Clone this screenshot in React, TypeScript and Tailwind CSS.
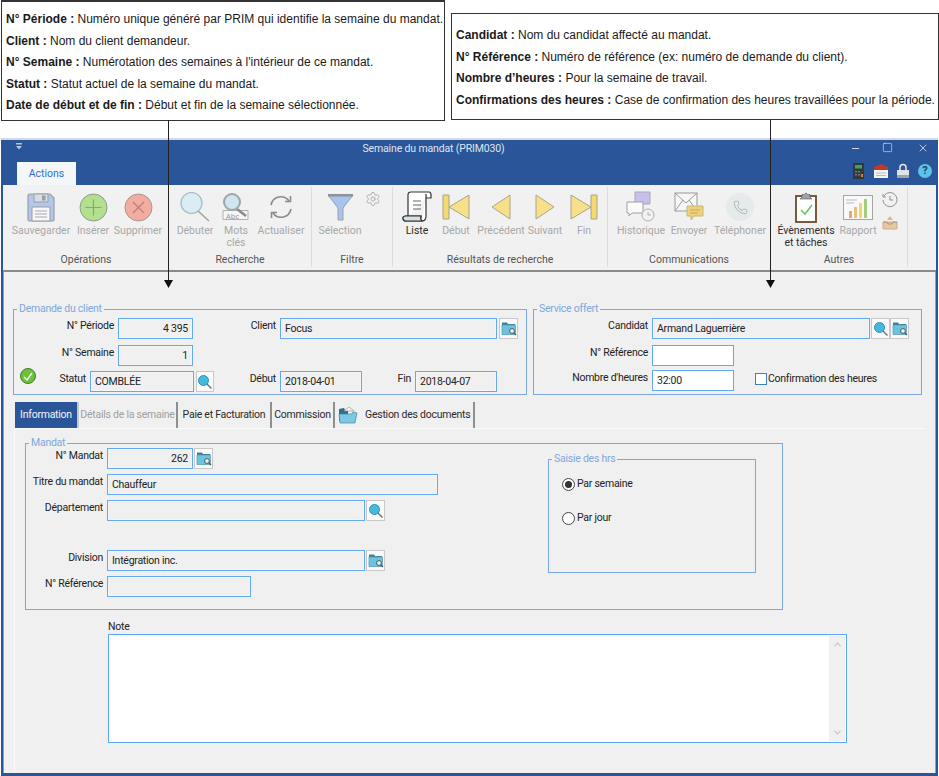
import { ReactNode } from "react";
import { Minus, Phone, Square, X, ChevronUp, ChevronDown, Settings } from "lucide-react";

function Arrow({ className }: { className: string }) {
  return (
    <div className={`absolute top-[120px] w-[9px] flex flex-col items-center ${className}`}>
      <div className="w-px h-[160px] bg-[#222]" />
      <svg width="9" height="8" viewBox="0 0 9 8">
        <path d="M0 0h9L4.5 8z" fill="#111" />
      </svg>
    </div>
  );
}

function Note({ title, text }: { title: string; text: string }) {
  return (
    <p className="h-[21.6px] leading-[21.6px] whitespace-nowrap">
      <b>{title}</b> {text}
    </p>
  );
}

function SearchIcon() {
  return (
    <svg width="16" height="16" viewBox="0 0 16 16">
      <path d="M9.5 9.5 14.5 14.5" stroke="#777" strokeWidth="1.5" />
      <circle cx="6.5" cy="6.5" r="5" fill="#45b9dc" stroke="#2f93b5" />
    </svg>
  );
}

function FolderSearchIcon() {
  return (
    <svg width="16" height="15" viewBox="0 0 16 15">
      <path d="M1 1.5h5l1 1.5h7v2H1z" fill="#3d7f98" />
      <rect x="1" y="4" width="13.5" height="9.5" fill="#6cc3de" stroke="#4f97b0" strokeWidth=".7" />
      <circle cx="11" cy="10" r="2.4" fill="#e8f4f8" stroke="#555" />
      <path d="M12.8 11.8 15 14" stroke="#555" strokeWidth="1.2" />
    </svg>
  );
}

function SmallButton({ children, w = "w-[19px]" }: { children: ReactNode; w?: string }) {
  return (
    <div className={`${w} h-[21px] shrink-0 flex items-center justify-center bg-[#fafafa] border border-[#c8c8c8]`}>
      {children}
    </div>
  );
}

function Label({ children, w }: { children: ReactNode; w: string }) {
  return <div className={`${w} shrink-0 text-right pr-[4px] leading-[16px] whitespace-nowrap`}>{children}</div>;
}

function Field({ w, value, right, white }: { w: string; value?: string; right?: boolean; white?: boolean }) {
  return (
    <div
      className={`${w} h-[21px] shrink-0 flex items-center px-[4px] border border-[#62a9f2] shadow-[inset_0_0_0_1px_rgba(255,255,255,.35)] ${
        white ? "bg-white" : "bg-[#f0f0f0]"
      } ${right ? "justify-end" : ""}`}
    >
      {value}
    </div>
  );
}

function Legend({ children }: { children: ReactNode }) {
  return (
    <span className="absolute -top-[8px] left-[3px] px-[2px] bg-[#f0f0f0] text-[#7ea8de] leading-[14px]">{children}</span>
  );
}

function Tool({ w, label, muted = true, children }: { w: string; label: ReactNode; muted?: boolean; children: ReactNode }) {
  return (
    <div className={`${w} shrink-0 flex flex-col items-center`}>
      <div className="h-[38px] pt-[2px] w-full flex items-center justify-center">{children}</div>
      <div className={`text-center leading-[11.5px] whitespace-nowrap ${muted ? "text-[#a8a8a8]" : "text-[#2c2c2c]"}`}>
        {label}
      </div>
    </div>
  );
}

function Group({ w, title, pl, children }: { w: string; title: string; pl: string; children: ReactNode }) {
  return (
    <div className={`${w} h-[80px] shrink-0 flex flex-col justify-between border-r border-[#dcdcdc]`}>
      <div className={`flex ${pl}`}>{children}</div>
      <div className="h-[14px] leading-[14px] text-center text-[#555]">{title}</div>
    </div>
  );
}

function Triangle({ dir }: { dir: "first" | "prev" | "next" | "last" }) {
  const shapes = {
    first: { w: 28, bar: "M1 1h6v24H1z", tri: "M27 1v24L7 13z" },
    prev: { w: 20, bar: "", tri: "M19 1v24L1 13z" },
    next: { w: 20, bar: "", tri: "M1 1v24l18-12z" },
    last: { w: 28, bar: "M21 1h6v24h-6z", tri: "M1 1v24l20-12z" },
  }[dir];
  return (
    <svg width={shapes.w} height="26" viewBox={`0 0 ${shapes.w} 26`}>
      <path d={shapes.tri} fill="#f8e08a" stroke="#a8a48c" />
      {shapes.bar && <path d={shapes.bar} fill="#f4d970" stroke="#a8a48c" />}
    </svg>
  );
}

export default function App() {
  return (
    <div className="relative w-[939px] h-[776px] bg-white overflow-hidden flex flex-col font-['Roboto',sans-serif] text-[10.5px] text-[#222]">
      <div className="h-[138px] shrink-0 flex items-start font-['Liberation_Sans',sans-serif] text-[12px] text-[#1a1a1a]">
        <div className="w-[444px] h-[121px] ml-px pl-[4px] pt-[7px] border border-[#333] border-t-2">
          <Note title="N° Période :" text="Numéro unique généré par PRIM qui identifie la semaine du mandat." />
          <Note title="Client :" text="Nom du client demandeur." />
          <Note title="N° Semaine :" text="Numérotation des semaines à l'intérieur de ce mandat." />
          <Note title="Statut :" text="Statut actuel de la semaine du mandat." />
          <Note title="Date de début et de fin :" text="Début et fin de la semaine sélectionnée." />
        </div>
        <div className="w-[488px] h-[107px] ml-[6px] mt-[13px] pl-[4px] pt-[11px] border border-[#333]">
          <Note title="Candidat :" text="Nom du candidat affecté au mandat." />
          <Note title="N° Référence :" text="Numéro de référence (ex: numéro de demande du client)." />
          <Note title="Nombre d’heures :" text="Pour la semaine de travail." />
          <Note title="Confirmations des heures :" text="Case de confirmation des heures travaillées pour la période." />
        </div>
      </div>

      <Arrow className="left-[164px]" />
      <Arrow className="left-[766px]" />

      <div className="h-[638px] ml-px w-[937px] flex flex-col bg-[#2a5599] border-t-2 border-t-[#d2d9e8] pl-[2px] pr-[2px] pb-[3px]">
        <div className="h-[22px] shrink-0 flex items-start relative text-[#dfe6f2]">
          <svg className="absolute left-[13px] top-[3px]" width="6" height="7" viewBox="0 0 6 7">
            <path d="M0 0h6v1.5H0zM0 3h6L3 6.5z" fill="#b8c6de" />
          </svg>
          <div className="flex-1 text-center pt-[1px] leading-[15px] pr-[72px] tracking-[-0.15px]">Semaine du mandat (PRIM030)</div>
          <Minus className="absolute left-[847px] top-[3px] text-[#dfe6f2]" size={11} strokeWidth={2} />
          <Square className="absolute left-[879px] top-[2px] text-[#dfe6f2]" size={11} strokeWidth={1.4} />
          <X className="absolute left-[914px] top-[2px] text-[#dfe6f2]" size={12} strokeWidth={1.6} />
        </div>
        <div className="h-[23px] shrink-0 flex justify-between">
          <div className="ml-[14px] w-[59px] h-[23px] bg-[#f4f6f8] text-[#2b70d0] text-center leading-[24px]">Actions</div>
          <div className="flex items-center gap-[8px] pr-[4px] pb-[6px]">
            <svg width="14" height="16" viewBox="0 0 14 16">
              <rect width="11" height="16" x="1" fill="#33393b" />
              <rect x="3" y="2" width="7" height="3.5" fill="#3fa45a" />
              <path d="M3 8h2v1.5H3zM6 8h2v1.5H6zM3 11h2v1.5H3zM6 11h2v1.5H6z" fill="#777" />
              <rect x="9" y="11" width="2" height="3" fill="#d08030" />
            </svg>
            <svg width="14" height="16" viewBox="0 0 14 16">
              <rect y="4" width="14" height="11" fill="#f3f3f3" />
              <path d="M0 7V4l7-3 7 3v3z" fill="#c0392b" />
              <path d="M2 10h10M2 12.500h10" stroke="#bbb" />
            </svg>
            <svg width="14" height="16" viewBox="0 0 14 16">
              <path d="M4 8V4.500a3 3 0 0 1 6 0V8" fill="none" stroke="#e8e8e8" strokeWidth="1.5" />
              <rect x="1" y="7" width="12" height="8" fill="#dfe3e6" />
              <rect x="1" y="12" width="12" height="3" fill="#9aa5ae" />
            </svg>
            <div className="w-[14px] h-[14px] rounded-full bg-[#5cc3e8] text-[#1d3f66] font-bold text-[11px] leading-[14px] text-center">?</div>
          </div>
        </div>

        <div className="h-[87px] shrink-0 bg-[#f1f1f1] border-b-2 border-[#8a8a8a] flex items-start pt-[2px] pl-[1px]">
          <Group w="w-[165px]" title="Opérations" pl="pl-[5px]">
            <Tool w="w-[64px]" label="Sauvegarder">
              <svg width="28" height="29" viewBox="0 0 28 29">
                <path d="M1 3q0-2 2-2h20l4 4v21q0 2-2 2H3q-2 0-2-2z" fill="#b3c7ec" stroke="#9a9da6" strokeWidth="1.2" />
                <path d="M7 1h14v8H7z" fill="#d9dde3" stroke="#9a9da6" />
                <rect x="15" y="2.500" width="3.500" height="5" fill="#9a9da6" />
                <path d="M5 14h18v14H5z" fill="#f7f7f7" stroke="#9a9da6" />
                <path d="M8 18h12M8 21h12M8 24h12" stroke="#aaa" />
              </svg>
            </Tool>
            <Tool w="w-[40px]" label="Insérer">
              <svg width="29" height="29" viewBox="0 0 29 29">
                <circle cx="14.500" cy="14.500" r="13.500" fill="#b3e08f" stroke="#8f9c8b" />
                <path d="M14.500 6.500v16M6.500 14.500h16" stroke="#84a873" strokeWidth="1.200" />
              </svg>
            </Tool>
            <Tool w="w-[50px]" label="Supprimer">
              <svg width="29" height="29" viewBox="0 0 29 29">
                <circle cx="14.500" cy="14.500" r="13.500" fill="#f3aca2" stroke="#a39a98" />
                <path d="m9 9 11 11M20 9 9 20" stroke="#b58078" strokeWidth="1.200" />
              </svg>
            </Tool>
          </Group>
          <Group w="w-[143px]" title="Recherche" pl="pl-[5px]">
            <Tool w="w-[42px]" label="Débuter">
              <svg width="30" height="30" viewBox="0 0 30 30">
                <path d="m18 19 11 10" stroke="#9a9a9a" strokeWidth="1.200" />
                <circle cx="11.500" cy="11" r="10.500" fill="#d8edf5" stroke="#a9b8bf" strokeWidth="1.200" />
              </svg>
            </Tool>
            <Tool w="w-[40px]" label={<>Mots<br />clés</>}>
              <svg width="28" height="30" viewBox="0 0 28 30">
                <path d="M1 18.500h25v9H1z" fill="#f5f5f5" stroke="#b0b0b0" />
                <text x="4" y="26.500" fontSize="7.500" fill="#999" fontFamily="Noto Sans">Abc</text>
                <path d="m15 17 9 7" stroke="#8a8a8a" strokeWidth="2.500" />
                <circle cx="10" cy="10" r="8" fill="#cfe6ee" stroke="#9ea4a8" strokeWidth="2" />
              </svg>
            </Tool>
            <Tool w="w-[50px]" label="Actualiser">
              <svg width="26" height="26" viewBox="0 0 26 26" fill="none" stroke="#8b8b8b" strokeWidth="1.600">
                <path d="M3 11a10 10 0 0 1 18-4" />
                <path d="M23 15a10 10 0 0 1-18 4" />
                <path d="m17 7.500h5.500v-5.500M9 18.500H3.500V24" />
              </svg>
            </Tool>
          </Group>
          <Group w="w-[81px]" title="Filtre" pl="pl-[6px]">
            <Tool w="w-[44px]" label="Sélection">
              <svg width="27" height="28" viewBox="0 0 27 28">
                <path d="M1 2h25L16 15v12h-5V15z" fill="#a9c4ec" stroke="#9aa0a6" />
                <path d="M1 1h25v2.500H1z" fill="#8c9299" />
              </svg>
            </Tool>
            <div className="w-[22px] h-[20px] flex items-center justify-center">
              <Settings className="text-[#a8a8a8] mt-[4px]" size={16} strokeWidth={1.3} />
            </div>
          </Group>
          <Group w="w-[215px]" title="Résultats de recherche" pl="pl-[6px]">
            <Tool w="w-[36px]" label="Liste" muted={false}>
              <svg width="30" height="32" viewBox="0 0 30 32" fill="none" stroke="#333" strokeWidth="1.200">
                <path d="M6 25V4q0-3 3-3h18q2 0 2 3v3h-5" fill="#fff" />
                <path d="M24 3v22q0 5-4 5H4q-3 0-3-3 0-2 3-2h15q-1 5 1 5" fill="#fff" />
                <path d="M4 25h15q-1 3 1 5H4q-3 0-3-3 0-2 3-2z" fill="#d5e0e3" />
                <path d="M11 10h8M11 14h8M11 18h8" stroke="#666" />
              </svg>
            </Tool>
            <Tool w="w-[42px]" label="Début"><Triangle dir="first" /></Tool>
            <Tool w="w-[48px]" label="Précédent"><Triangle dir="prev" /></Tool>
            <Tool w="w-[40px]" label="Suivant"><Triangle dir="next" /></Tool>
            <Tool w="w-[38px]" label="Fin"><Triangle dir="last" /></Tool>
          </Group>
          <Group w="w-[163px]" title="Communications" pl="pl-[4px]">
            <Tool w="w-[58px]" label="Historique">
              <svg width="30" height="32" viewBox="0 0 30 32">
                <path d="M9 1h15v12H9z" fill="#c5c0f0" stroke="#aaa" />
                <path d="M1 11h16v11H6l-3 3v-3H1z" fill="#fafafa" stroke="#a0a0a0" />
                <circle cx="22" cy="24" r="6" fill="#f1f1f1" stroke="#b0b0b0" />
                <path d="M22 21v3h3" fill="none" stroke="#b0b0b0" />
              </svg>
            </Tool>
            <Tool w="w-[38px]" label="Envoyer">
              <svg width="30" height="30" viewBox="0 0 30 30">
                <rect x="1" y="1" width="22" height="18" fill="#f7f7f7" stroke="#9a9a9a" />
                <path d="m1 1 11 10L23 1M1 19l8-11M23 19l-8-11" fill="none" stroke="#9a9a9a" />
                <path d="M13 14h16v10h-9l-3 4v-4h-4z" fill="#efd27c" stroke="#c9b779" />
                <path d="M16 18h10M16 21h8" stroke="#c9a850" />
              </svg>
            </Tool>
            <Tool w="w-[64px]" label="Téléphoner">
              <div className="w-[28px] h-[28px] rounded-full bg-[#e5eaea] flex items-center justify-center">
                <Phone className="text-[#a6aaaa]" size={15} strokeWidth={1.3} />
              </div>
            </Tool>
          </Group>
          <Group w="w-[137px]" title="Autres" pl="pl-[5px]">
            <Tool w="w-[60px]" label={<>Évènements<br />et tâches</>} muted={false}>
              <svg width="22" height="31" viewBox="0 0 22 31">
                <rect x="1" y="4" width="20" height="26" fill="#fff" stroke="#6b4a28" strokeWidth="1.800" />
                <path d="M7 5V2.500h2.500L11 .8l1.500 1.700H15V5l2 2H5z" fill="#9aa5ae" stroke="#555" strokeWidth=".6" />
                <path d="m6 18 4 4 7-9" fill="none" stroke="#62c65a" strokeWidth="1.500" />
              </svg>
            </Tool>
            <Tool w="w-[44px]" label="Rapport">
              <svg width="30" height="25" viewBox="0 0 30 25">
                <rect x=".5" y=".5" width="29" height="24" fill="#f8f8f8" stroke="#a5a5a5" />
                <path d="M3 5h11M3 8h8" stroke="#bbb" />
                <rect x="6" y="16" width="3" height="7" fill="#e8a47c" />
                <rect x="11" y="12" width="3" height="11" fill="#e8c07c" />
                <rect x="16" y="8" width="3" height="15" fill="#ecd774" />
                <rect x="21" y="4" width="3" height="19" fill="#a3cf7c" />
              </svg>
            </Tool>
            <div className="w-[20px] flex flex-col items-center gap-[8px] pt-[5px]">
              <svg width="16" height="16" viewBox="0 0 16 16" fill="none" stroke="#8d8d8d">
                <path d="M2 4a7 7 0 1 1-1 4" />
                <path d="M1 2v3h3M8 4v4h3" />
              </svg>
              <svg width="16" height="14" viewBox="0 0 16 14">
                <path d="M5 4h6L8 0z" fill="#d8b890" />
                <path d="M1 6h14v7H1z" fill="#e8c8a0" stroke="#c8b090" />
                <path d="M1 6h4l1 2h4l1-2h4" fill="none" stroke="#b09878" />
              </svg>
            </div>
          </Group>
        </div>

        <div className="flex-1 bg-[#f0f0f0] border-x border-x-[#a0a0a0] pt-[37px] flex flex-col tracking-[-0.25px]">
          <div className="flex ml-[9px] gap-[6px]">
            <div className="relative w-[514px] h-[86px] border border-[#7aa8e6] pt-[8px]">
              <Legend>Demande du client</Legend>
              <div className="flex items-start">
                <Label w="w-[104px]">N° Période</Label>
                <Field w="w-[75px]" value="4 395" right />
                <Label w="w-[87px]">Client</Label>
                <Field w="w-[217px]" value="Focus" />
                <div className="w-[2px]" />
                <SmallButton><FolderSearchIcon /></SmallButton>
              </div>
              <div className="flex items-start mt-[6px]">
                <Label w="w-[104px]">N° Semaine</Label>
                <Field w="w-[75px]" value="1" right />
              </div>
              <div className="flex items-start mt-[5px]">
                <div className="pl-[6px] -mt-[3px] w-[22px] shrink-0">
                  <div className="w-[16px] h-[16px] rounded-full bg-[#6cc23a] border border-[#3f7f22] flex items-center justify-center">
                    <svg width="10" height="9" viewBox="0 0 10 9">
                      <path d="m1 5 3 3 5-7" fill="none" stroke="#fff" strokeWidth="1.300" />
                    </svg>
                  </div>
                </div>
                <Label w="w-[54px]">Statut</Label>
                <Field w="w-[104px]" value="COMBLÉE" />
                <div className="w-[2px]" />
                <SmallButton w="w-[18px]"><SearchIcon /></SmallButton>
                <Label w="w-[66px]">Début</Label>
                <Field w="w-[82px]" value="2018-04-01" />
                <Label w="w-[53px]">Fin</Label>
                <Field w="w-[82px]" value="2018-04-07" />
              </div>
            </div>
            <div className="relative w-[389px] h-[86px] border border-[#7aa8e6] pt-[8px]">
              <Legend>Service offert</Legend>
              <div className="flex items-start">
                <Label w="w-[118px]">Candidat</Label>
                <Field w="w-[218px]" value="Armand Laguerrière" />
                <div className="w-[1px]" />
                <SmallButton><SearchIcon /></SmallButton>
                <SmallButton><FolderSearchIcon /></SmallButton>
              </div>
              <div className="flex items-start mt-[6px]">
                <Label w="w-[118px]">N° Référence</Label>
                <Field w="w-[82px]" white />
              </div>
              <div className="flex items-start mt-[4px]">
                <Label w="w-[118px]">Nombre d'heures</Label>
                <Field w="w-[82px]" value="32:00" white />
                <div className="ml-[21px] mt-[3px] w-[12px] h-[12px] shrink-0 bg-white border border-[#3d7fc0]" />
                <div className="ml-[1px] leading-[17px] whitespace-nowrap">Confirmation des heures</div>
              </div>
            </div>
          </div>

          <div className="ml-[11px] mt-[7px] h-[26px] flex text-[#2a2a2a] whitespace-nowrap">
            <div className="w-[62px] bg-[#2a5599] text-[#f2f5fa] flex items-center justify-center">Information</div>
            <div className="w-[101px] border-r-2 border-r-[#8f8f8f] border-l-2 border-l-[#c8c8c8] text-[#a0a0a0] flex items-center justify-center">Détails de la semaine</div>
            <div className="w-[94px] border-r-2 border-r-[#8f8f8f] flex items-center justify-center">Paie et Facturation</div>
            <div className="w-[63px] border-r-2 border-r-[#8f8f8f] flex items-center justify-center">Commission</div>
            <div className="w-[140px] border-r-2 border-r-[#8f8f8f] flex items-center pl-[3px] gap-[7px]">
              <svg className="shrink-0" width="20" height="18" viewBox="0 0 20 18">
                <path d="M1 3l5-1 1 2h3V15H1z" fill="#2f6f8a" />
                <path d="M6 5l5-4 5 4z" fill="#f6f6f6" stroke="#888" strokeWidth=".6" />
                <path d="M1 8h13l1-2 4 1-2 10H2z" fill="#7cc8e4" stroke="#3f88a5" strokeWidth=".7" />
              </svg>
              <span>Gestion des documents</span>
            </div>
          </div>

          <div className="ml-[10px] w-[912px] flex-1 border-t border-l border-[#fafafa] pt-[14px]">
            <div className="relative ml-[10px] w-[758px] h-[167px] border border-[#7aa8e6] flex">
              <Legend>Mandat</Legend>
              <div className="w-[522px] shrink-0 pt-[4px]">
                <div className="flex items-start">
                  <Label w="w-[81px]">N° Mandat</Label>
                  <Field w="w-[86px]" value="262" right />
                  <div className="w-[1px]" />
                  <SmallButton><FolderSearchIcon /></SmallButton>
                </div>
                <div className="flex items-start mt-[5px]">
                  <Label w="w-[81px]">Titre du mandat</Label>
                  <Field w="w-[331px]" value="Chauffeur" />
                </div>
                <div className="flex items-start mt-[5px]">
                  <Label w="w-[81px]">Département</Label>
                  <Field w="w-[258px]" />
                  <div className="w-[1px]" />
                  <SmallButton><SearchIcon /></SmallButton>
                </div>
                <div className="flex items-start mt-[29px]">
                  <Label w="w-[81px]">Division</Label>
                  <Field w="w-[258px]" value="Intégration inc." />
                  <div className="w-[1px]" />
                  <SmallButton><FolderSearchIcon /></SmallButton>
                </div>
                <div className="flex items-start mt-[5px]">
                  <Label w="w-[81px]">N° Référence</Label>
                  <Field w="w-[144px]" />
                </div>
              </div>
              <div className="relative mt-[15px] w-[208px] h-[114px] border border-[#7aa8e6] pl-[13px] pt-[16px]">
                <Legend>Saisie des hrs</Legend>
                <div className="flex items-center h-[16px] gap-[2px]">
                  <div className="w-[13px] h-[13px] rounded-full bg-white border border-[#444] flex items-center justify-center">
                    <div className="w-[7px] h-[7px] rounded-full bg-[#333]" />
                  </div>
                  Par semaine
                </div>
                <div className="flex items-center h-[16px] gap-[2px] mt-[18px]">
                  <div className="w-[13px] h-[13px] rounded-full bg-white border border-[#444]" />
                  Par jour
                </div>
              </div>
            </div>
            <div className="ml-[93px] mt-[9px] h-[15px] leading-[15px]">Note</div>
            <div className="ml-[93px] w-[739px] h-[109px] bg-white border border-[#5aaaf5] flex justify-end">
              <div className="w-[16px] bg-[#f0f0f0] m-px flex flex-col justify-between items-center py-[3px] text-[#c4c4c4]">
                <ChevronUp size={11} strokeWidth={2.2} />
                <ChevronDown size={11} strokeWidth={2.2} />
              </div>
            </div>
          </div>
        </div>
      </div>
    </div>
  );
}
